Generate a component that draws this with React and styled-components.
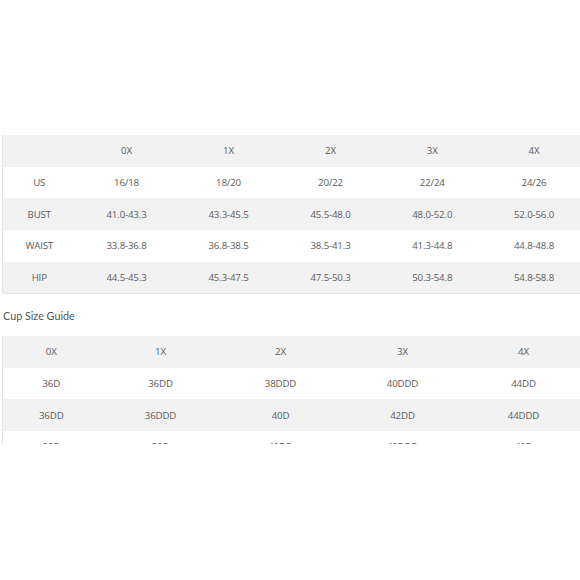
import React from "react";
import styled, { createGlobalStyle } from "styled-components";

const sizes = ["0X", "1X", "2X", "3X", "4X"];

const chart = [
	["US", "16/18", "18/20", "20/22", "22/24", "24/26"],
	["BUST", "41.0-43.3", "43.3-45.5", "45.5-48.0", "48.0-52.0", "52.0-56.0"],
	["WAIST", "33.8-36.8", "36.8-38.5", "38.5-41.3", "41.3-44.8", "44.8-48.8"],
	["HIP", "44.5-45.3", "45.3-47.5", "47.5-50.3", "50.3-54.8", "54.8-58.8"],
];

const cups = [
	["36D", "36DD", "38DDD", "40DDD", "44DD"],
	["36DD", "36DDD", "40D", "42DD", "44DDD"],
	["38D", "38D", "40DD", "42DDD", "46D"],
];

const chartCols = [73, 102, 102, 102, 101.5, 102];
const cupCols = [97, 122, 118, 126, 116];

const sum = a => a.reduce((t, v) => t + v, 0);

const App = () => {
	return (
		<Page>
			<GlobalStyle />
			<Table $width={sum(chartCols)}>
				<colgroup>
					{chartCols.map((w, i) => (
						<col key={i} style={{ width: w }} />
					))}
				</colgroup>
				<tbody>
					<Row $shaded>
						<Cell />
						{sizes.map(s => (
							<Cell key={s}>{s}</Cell>
						))}
					</Row>
					{chart.map((row, i) => (
						<Row key={row[0]} $shaded={i % 2 === 1}>
							{row.map((c, j) => (
								<Cell key={j}>{c}</Cell>
							))}
						</Row>
					))}
				</tbody>
			</Table>

			<Title>Cup Size Guide</Title>

			<Clip>
				<Table $width={sum(cupCols)}>
					<colgroup>
						{cupCols.map((w, i) => (
							<col key={i} style={{ width: w }} />
						))}
					</colgroup>
					<tbody>
						<Row $shaded>
							{sizes.map(s => (
								<Cell key={s}>{s}</Cell>
							))}
						</Row>
						{cups.map((row, i) => (
							<Row key={i} $shaded={i % 2 === 1}>
								{row.map((c, j) => (
									<Cell key={j}>{c}</Cell>
								))}
							</Row>
						))}
					</tbody>
				</Table>
			</Clip>
		</Page>
	);
};

export default App;

const GlobalStyle = createGlobalStyle`
	html, body {
		margin: 0;
		padding: 0;
		background: #ffffff;
	}
	body {
		font-family: "Open Sans", "Liberation Sans", sans-serif;
		overflow: hidden;
	}
`;

const Page = styled.div`
	width: 580px;
	height: 580px;
	padding: 135px 0 0 2px;
	box-sizing: border-box;
	overflow: hidden;
`;

const Table = styled.table`
	border-collapse: collapse;
	table-layout: fixed;
	width: ${p => p.$width}px;
	border-left: 1px solid #e4e4e4;
	border-bottom: 1px solid #e8e8e8;
`;

const Row = styled.tr`
	height: 31.7px;
	background: ${p => (p.$shaded ? "#f2f2f2" : "#ffffff")};
`;

const Cell = styled.td`
	padding: 0;
	text-align: center;
	vertical-align: middle;
	font-size: 9.7px;
	color: #5c5c5c;
	letter-spacing: -0.15px;
	white-space: nowrap;
`;

const Title = styled.div`
	height: 42px;
	line-height: 44px;
	font-family: "Lato", "Open Sans", sans-serif;
	font-size: 10.8px;
	color: #555555;
	padding-left: 1px;
`;

const Clip = styled.div`
	height: 108px;
	overflow: hidden;
`;
